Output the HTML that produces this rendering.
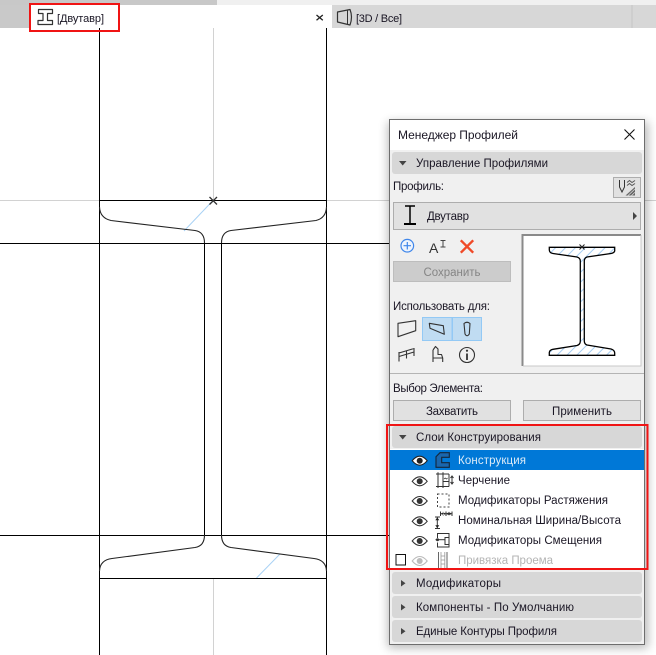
<!DOCTYPE html>
<html lang="ru">
<head>
<meta charset="utf-8">
<title>Менеджер Профилей</title>
<style>
html,body{margin:0;padding:0;background:#fff;width:656px;height:655px;overflow:hidden}
svg{display:block;position:absolute;left:0;top:0}
text{font-family:"Liberation Sans","Noto Sans CJK SC",sans-serif;font-size:11.5px;fill:#1a1624}
</style>
</head>
<body>
<svg width="656" height="655" viewBox="0 0 656 655" xmlns="http://www.w3.org/2000/svg">
<defs>
<filter id="sh" x="-10%" y="-10%" width="120%" height="120%"><feGaussianBlur stdDeviation="5"/></filter>
<clipPath id="pc"><path d="M549.3 247.3H614.7V251Q614 253 611 253.5L587 257Q584.3 258 584.3 261V341Q584.3 344 587 345L611 349Q614.5 350 614.7 353V355.3H549.3V352.5Q549.5 350 553 349.3L577 345.5Q580.3 344.5 580.3 341V261Q580.3 258 577 257L553 253.5Q549.5 253 549.3 250Z"/></clipPath>
<pattern id="h" width="7" height="7" patternUnits="userSpaceOnUse" patternTransform="rotate(45)"><line x1="1" y1="0" x2="1" y2="7" stroke="#a4cdf3" stroke-width="1"/></pattern>
</defs>

<!-- tab bar -->
<rect x="0" y="0" width="656" height="5" fill="#f0f0f0"/>
<rect x="0" y="0" width="217" height="5" fill="#c8c8c8"/>
<rect x="0" y="5" width="30" height="23" fill="#c9c9c9"/>
<rect x="332" y="5" width="324" height="23" fill="#d7d7d7"/>
<rect x="631.5" y="5" width="1" height="23" fill="#c4c4c4"/>
<g fill="none" stroke="#333" stroke-width="1.2" stroke-linejoin="round">
<path d="M38.500 9.500H52.500V13.500H47.500V20.500H52.500V24.500H38V20.500H43V13.500H38.500Z"/>
<path d="M337.500 12L350 9.500Q353 17 350 25L337.500 22Z"/>
<path d="M347.500 10V24.500" stroke-width="1"/>
</g>
<text x="57" y="22" textLength="47" style="font-size:11px">[Двутавр]</text>
<path d="M316.500 15L322.800 20.300M322.800 15L316.500 20.300" stroke="#222" stroke-width="1.300"/>
<text x="356" y="22" textLength="46" style="font-size:11px">[3D / Все]</text>

<!-- drawing -->
<g fill="none" stroke="#d2d2d2" stroke-width="1">
<path d="M213.500 28V200M213.500 578V655M0 200.500H99M327 200.500H656"/>
</g>
<g fill="none" stroke="#a9d2f5" stroke-width="1">
<path d="M213 200.500L184 231M256.500 578L280 554"/>
</g>
<g fill="none" stroke="#000" stroke-width="1">
<path d="M99.500 28V655M326.500 28V655M99.500 200.500H326.500M99.500 578.500H326.500M0 243.500H390M0 535.500H390"/>
<path d="M204.500 243V535M221.500 243V535"/>
</g>
<g fill="none" stroke="#222" stroke-width="1.100">
<path d="M99.500 207Q100 218 111 220.500L195 230.500Q204.500 232 204.500 243"/>
<path d="M221.500 243Q221.500 232 231 230.500L316 220.500Q326 218 326.500 207"/>
<path d="M204.500 535Q204.500 546 195 547.500L112 558.500Q100 560 99.500 571"/>
<path d="M221.500 535Q221.500 546 231 547.500L314 558.500Q326 560 326.500 571"/>
</g>
<path d="M209.500 197L217 204.500M217 197L209.500 204.500" stroke="#333" stroke-width="1.300"/>

<!-- panel -->
<rect x="388" y="122" width="260" height="526" fill="#000" opacity=".28" filter="url(#sh)"/>
<rect x="389.500" y="119.500" width="255" height="525" fill="#f0f0f0" stroke="#6e6e6e"/>
<rect x="390" y="120" width="254" height="30" fill="#fff"/>
<text x="398" y="139" textLength="120" style="font-size:12px">Менеджер Профилей</text>
<path d="M624.500 129.500L634.500 139.500M634.500 129.500L624.500 139.500" stroke="#111" stroke-width="1.100"/>

<!-- section 1 -->
<rect x="392" y="152" width="250" height="22" rx="3" fill="#d7d7d7"/>
<path d="M399 161H406.500L402.700 165.500Z" fill="#444"/>
<text x="416" y="167" textLength="132">Управление Профилями</text>
<text x="393" y="190" textLength="51">Профиль:</text>
<rect x="613.500" y="177.500" width="27" height="20" fill="#e1e1e1" stroke="#adadad"/>
<g fill="none" stroke="#333" stroke-width="1">
<path d="M619.500 180V187L622 192L624.500 187V180"/>
<path d="M627 182.500L629.500 180.500L632 182.500L635 180.500M627 185.500L629.500 183.500L632 185.500L635 183.500" stroke="#555"/>
</g>
<path d="M625.500 195.500L635 187V195.500Z" fill="#666"/>
<path d="M628 195.500L635 189M631.500 195.500L635 192.300" stroke="#ddd" stroke-width=".7"/>

<rect x="393.500" y="202.500" width="247" height="27" fill="#e1e1e1" stroke="#adadad"/>
<path d="M405 206H415M410 206V224" stroke="#000" stroke-width="1.500" fill="none"/>
<rect x="404" y="223" width="12" height="2" fill="#000"/>
<text x="427" y="220" textLength="42">Двутавр</text>
<path d="M633 212V220L637 216Z" fill="#444"/>

<!-- action icons -->
<circle cx="407.300" cy="245.700" r="6.300" fill="#eef4fd" stroke="#3f86ea" stroke-width="1.200"/>
<path d="M407.300 242V249.500M403.500 245.700H411" stroke="#3f86ea" stroke-width="1.200"/>
<text x="429" y="253" style="font-size:14px;fill:#333">A</text>
<path d="M440.500 240.500H445.500M443 240.500V247M440.500 247H445.500" stroke="#444" stroke-width="1" fill="none"/>
<path d="M460.800 240.300L473.200 252.700M473.200 240.300L460.800 252.700" stroke="#f04a28" stroke-width="2.400"/>

<!-- preview -->
<rect x="522.500" y="235" width="118.500" height="131" fill="#fff"/>
<path d="M522.500 366V235H641" fill="none" stroke="#8a8a8a" stroke-width="2"/>
<path d="M641 235V366H523" fill="none" stroke="#c8c8c8" stroke-width="1"/>
<rect x="545" y="244" width="75" height="115" fill="url(#h)" clip-path="url(#pc)"/>
<path d="M549.300 247.300H614.700V251Q614 253 611 253.500L587 257Q584.300 258 584.300 261V341Q584.300 344 587 345L611 349Q614.500 350 614.700 353V355.300H549.300V352.500Q549.500 350 553 349.300L577 345.500Q580.300 344.500 580.300 341V261Q580.300 258 577 257L553 253.500Q549.500 253 549.300 250Z" fill="none" stroke="#000" stroke-width="1.300"/>
<path d="M579.500 244.500L584.500 249.500M584.500 244.500L579.500 249.500" stroke="#222" stroke-width="1"/>

<!-- save -->
<rect x="393.500" y="261.500" width="117" height="20" fill="#cccccc" stroke="#bdbdbd"/>
<text x="423.500" y="276" textLength="57" style="fill:#858585">Сохранить</text>

<text x="393" y="310" textLength="97">Использовать для:</text>
<rect x="422.500" y="317.500" width="29.500" height="23" fill="#c0dcf2" stroke="#93c9f5"/>
<rect x="452.500" y="317.500" width="29" height="23" fill="#c0dcf2" stroke="#93c9f5"/>
<g fill="none" stroke="#333" stroke-width="1.100" stroke-linejoin="round">
<path d="M398 323.300L415.700 320.700V330.700L398 336.700Z"/>
<path d="M429.300 323.300L443.300 325.700L444.300 334.300L430 328.300Z"/>
<path d="M464 323.500Q467 321 470 323.500L469.300 334Q467 337.500 465 334Z"/>
<path d="M399 353L414 348.500M399 356.500L414 352M399 352V361.500M406.500 350.500V358.500M414 348V356"/>
<path d="M433 350L435.500 346.500L438 349V354.500H441.500L442.700 358V362M433 350V362M433 358H442.700"/>
<circle cx="467" cy="355" r="7.500"/>
</g>
<path d="M467 353.500V360" stroke="#333" stroke-width="1.800"/>
<circle cx="467" cy="350.700" r="1.100" fill="#333"/>

<rect x="390" y="373" width="254" height="1" fill="#b4b4b4"/>
<text x="393" y="392" textLength="90">Выбор Элемента:</text>
<rect x="393.500" y="400.500" width="117" height="20" fill="#e1e1e1" stroke="#adadad"/>
<rect x="523.500" y="400.500" width="117" height="20" fill="#e1e1e1" stroke="#adadad"/>
<text x="426" y="415" textLength="52">Захватить</text>
<text x="552" y="415" textLength="60">Применить</text>

<!-- section 2 -->
<rect x="392" y="426" width="250" height="22" rx="3" fill="#d7d7d7"/>
<path d="M399 435H406.500L402.700 439.500Z" fill="#444"/>
<text x="416" y="441" textLength="125">Слои Конструирования</text>
<rect x="390" y="449" width="254" height="119" fill="#fff"/>
<rect x="390" y="450" width="254" height="20" fill="#0078d7"/>

<g>
<g transform="translate(419.700 460.700)"><path d="M-7.500 0Q0 -9 7.500 0Q0 9 -7.500 0Z" fill="#fff" stroke="#222" stroke-width="1.100"/><circle r="3" fill="#222"/></g>
<g transform="translate(419.700 481.300)"><path d="M-7.500 0Q0 -9 7.500 0Q0 9 -7.500 0Z" fill="#fff" stroke="#333" stroke-width="1.100"/><circle r="3" fill="#333"/></g>
<g transform="translate(419.700 501)"><path d="M-7.500 0Q0 -9 7.500 0Q0 9 -7.500 0Z" fill="#fff" stroke="#333" stroke-width="1.100"/><circle r="3" fill="#333"/></g>
<g transform="translate(419.700 521.300)"><path d="M-7.500 0Q0 -9 7.500 0Q0 9 -7.500 0Z" fill="#fff" stroke="#333" stroke-width="1.100"/><circle r="3" fill="#333"/></g>
<g transform="translate(419.700 541)"><path d="M-7.500 0Q0 -9 7.500 0Q0 9 -7.500 0Z" fill="#fff" stroke="#333" stroke-width="1.100"/><circle r="3" fill="#333"/></g>
<g transform="translate(419.700 561)"><path d="M-7.500 0Q0 -9 7.500 0Q0 9 -7.500 0Z" fill="#fff" stroke="#bbb" stroke-width="1.100"/><circle r="3" fill="#bbb"/></g>
</g>
<rect x="396" y="554.500" width="9.500" height="10.500" fill="#fff" stroke="#111"/>

<g fill="none" stroke="#333" stroke-width="1">
<path d="M440 452.700H449.300V457.300H441.700V462.700H449.300V467.300H436V456.700Z" fill="#1a66ad" stroke="#14263a" stroke-width="1.100"/>
<path d="M436 474H449M436 486.500H449M438 472.300V488M443 472.300V488M449 474V486.500M443 481.500H449"/>
<path d="M444 479l1.200 -1l1.200 1l1.200 -1" stroke-width=".8"/>
<path d="M452 476.500V483.500M450.500 478L452 476L453.500 478M450.500 482L452 484L453.500 482"/>
<path d="M437.500 494H449V507H437.500Z" stroke-dasharray="2 2" stroke="#444"/>
<path d="M440.500 511.500V516M446 511.500V516M452 511.500V516M440.500 513.700H452"/>
<path d="M441 513.700L444 511.800V515.600ZM445.500 513.700L442.800 511.800V515.600ZM446.500 513.700L449.200 511.800V515.600ZM451.500 513.700L448.800 511.800V515.600Z" fill="#222" stroke="none"/>
<path d="M435 517H440M437.300 517V528.300M435 528.500H440"/>
<path d="M437.300 517.500L435.300 520.300H439.300ZM437.300 528L435.300 525.200H439.300Z" fill="#222" stroke="none"/>
<path d="M437.500 538V533.500H449V537.500M449 545V547H437.500V542.500"/>
<path d="M435.500 539.700H445"/>
<rect x="445" y="537.500" width="4" height="7"/>
<circle cx="437.500" cy="539.700" r="1" fill="#333"/>
<path d="M438.500 552V568M447 552V568" stroke="#666"/>
<path d="M441 552V568M444.800 552V568M441 556H444.800M441 560H444.800M441 564H444.800" stroke="#999" stroke-width=".8"/>
</g>

<text x="458" y="464" textLength="68" style="fill:#dcebf8">Конструкция</text>
<text x="458" y="484" textLength="52">Черчение</text>
<text x="458" y="504" textLength="150">Модификаторы Растяжения</text>
<text x="458" y="524" textLength="163">Номинальная Ширина/Высота</text>
<text x="458" y="544" textLength="144">Модификаторы Смещения</text>
<text x="458" y="564" textLength="95" style="fill:#b4b4b4">Привязка Проема</text>

<!-- collapsed -->
<rect x="392" y="572" width="250" height="22" rx="3" fill="#d7d7d7"/>
<rect x="392" y="596" width="250" height="22" rx="3" fill="#d7d7d7"/>
<rect x="392" y="620" width="250" height="22" rx="3" fill="#d7d7d7"/>
<path d="M401 580V586.500L405.500 583.200ZM401 604V610.500L405.500 607.200ZM401 628V634.500L405.500 631.200Z" fill="#444"/>
<text x="416" y="587" textLength="85">Модификаторы</text>
<text x="416" y="611" textLength="158">Компоненты - По Умолчанию</text>
<text x="416" y="635" textLength="141">Единые Контуры Профиля</text>

<!-- red highlights -->
<rect x="30" y="4" width="89" height="27" fill="none" stroke="#f01414" stroke-width="2"/>
<rect x="387" y="425" width="260.500" height="144" fill="none" stroke="#f01414" stroke-width="2"/>
</svg>
</body>
</html>
